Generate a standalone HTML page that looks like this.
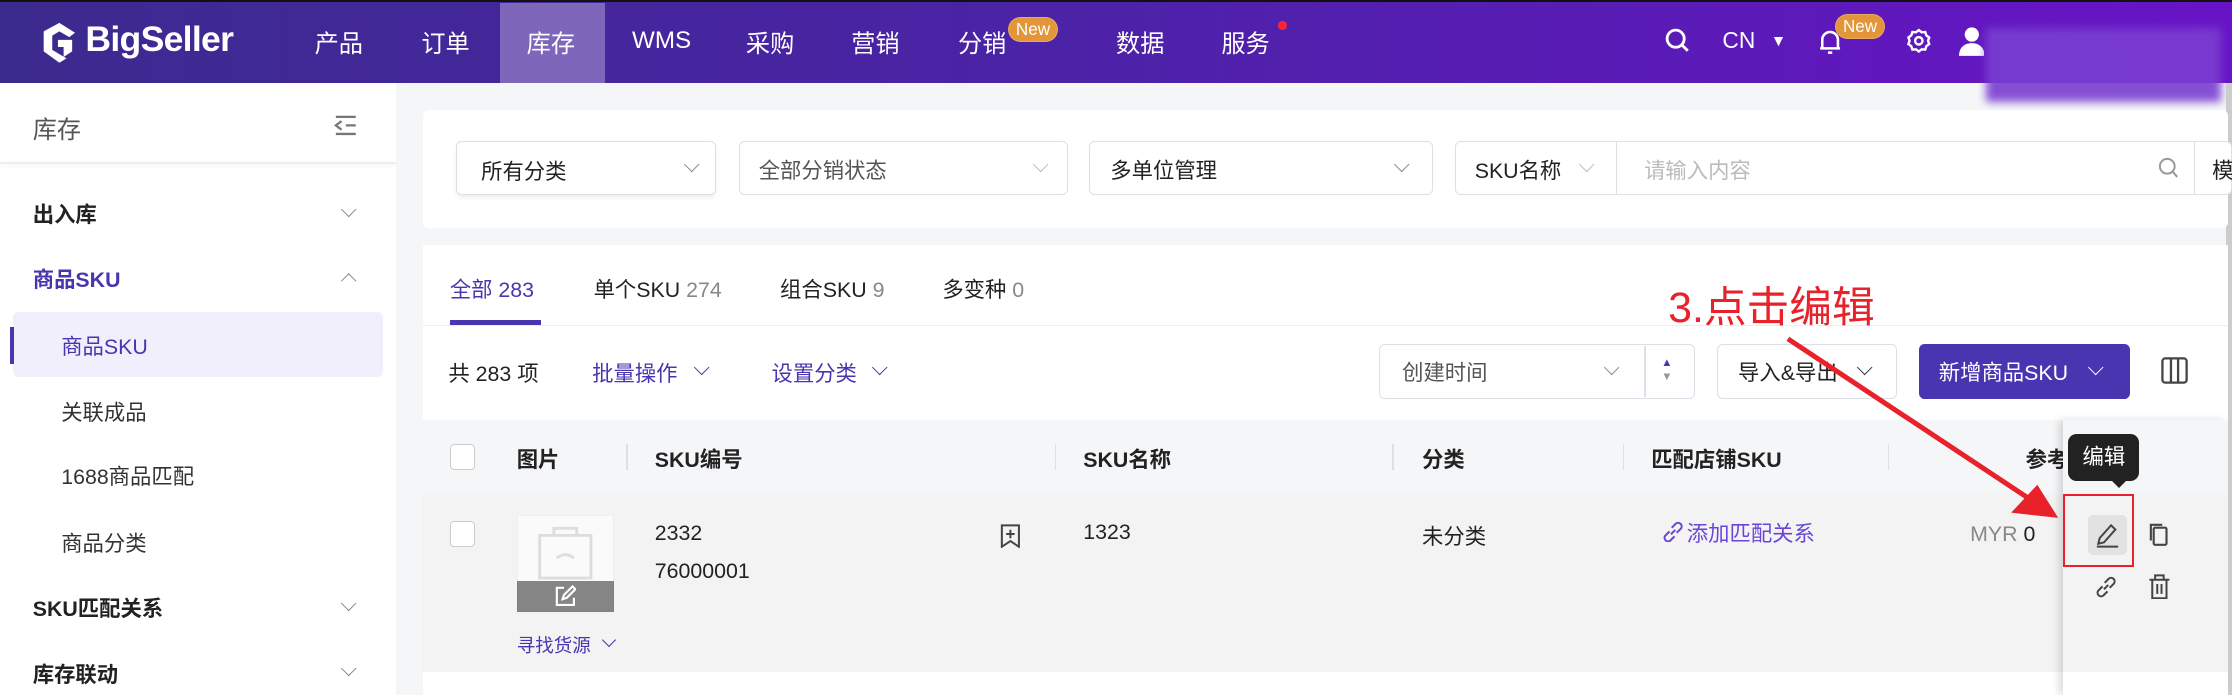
<!DOCTYPE html>
<html><head><meta charset="utf-8"><style>
*{box-sizing:border-box;margin:0;padding:0}
html,body{width:2232px;height:695px;overflow:hidden;background:#f5f6f8}
#r{width:1568px;height:488px;position:relative;zoom:1.42347;font-family:"Liberation Sans","Noto Sans CJK SC",sans-serif;font-size:15px;color:#222;overflow:hidden}
.a{position:absolute;white-space:nowrap}
.hd{left:0;top:0;width:1568px;height:58px;background:linear-gradient(90deg,#3b2b8e,#4d22a8 50%,#6814c6);border-top:2px solid #111}
.nav{color:#fff;font-size:17px;top:17px}
.badge{background:#e3953a;color:#fff;font-size:12px;border-radius:9px;padding:1px 5px;border:1px solid #fff3}
.box{background:#fff;border:1px solid #dcdfe6;border-radius:4px}
.chev{width:8px;height:8px;border-right:1.3px solid #888;border-bottom:1.3px solid #888;transform:rotate(45deg)}
.side{font-size:15px;color:#333}
.b{font-weight:bold;color:#222}
.vd{width:1px;height:18px;background:#dcdfe6;top:312px}
.th{top:311px;font-weight:bold;font-size:15px}
</style></head><body><div id="r">
<div class="a hd"></div>
<div class="a" style="left:351px;top:2px;width:74px;height:56px;background:#7e66ba"></div>
<svg class="a" style="left:27px;top:14px" width="30" height="32" viewBox="0 0 30 32"><path d="M15 2 L4 8 V22 L15 30 L20 27 L10 21 V11 L15 8 L22 12 L26 9Z M14 14 L24 14 V22 L18 26 L18 19 L14 19Z" fill="#fff"/></svg>
<div class="a" style="left:60px;top:13px;color:#fff;font-size:25px;font-weight:bold;letter-spacing:-0.5px">BigSeller</div>
<div class="a nav" style="left:221px">产品</div>
<div class="a nav" style="left:296px">订单</div>
<div class="a nav" style="left:370px">库存</div>
<div class="a nav" style="left:444px;top:19px">WMS</div>
<div class="a nav" style="left:524px">采购</div>
<div class="a nav" style="left:598px">营销</div>
<div class="a nav" style="left:673px">分销</div>
<div class="a badge" style="left:708px;top:12px">New</div>
<div class="a nav" style="left:784px">数据</div>
<div class="a nav" style="left:858px">服务</div>
<div class="a" style="left:898px;top:15px;width:6px;height:6px;border-radius:50%;background:#f23"></div>
<svg class="a" style="left:1170px;top:20px" width="17" height="18"><circle cx="7.5" cy="7.5" r="6" stroke="#fff" stroke-width="2" fill="none"/><path d="M12 12l4 4" stroke="#fff" stroke-width="2"/></svg>
<div class="a nav" style="left:1210px;top:19px;font-size:16px">CN</div>
<div class="a" style="left:1244px;top:23px;color:#fff;font-size:11px">▼</div>
<svg class="a" style="left:1277px;top:19px" width="17" height="20"><path d="M3 15V9a5.5 5.5 0 0 1 11 0v6zM1.5 15h14M7 18h3" stroke="#fff" stroke-width="1.8" fill="none"/></svg>
<div class="a badge" style="left:1289px;top:10px">New</div>
<svg class="a" style="left:1339px;top:20px" width="18" height="18" viewBox="0 0 18 18"><path d="M9 1.5l2 1.5 2.5-.2.8 2.4 2 1.5-.8 2.3.8 2.3-2 1.5-.8 2.4-2.5-.2-2 1.5-2-1.5-2.5.2-.8-2.4-2-1.5.8-2.3-.8-2.3 2-1.5.8-2.4 2.5.2z" fill="none" stroke="#fff" stroke-width="1.7"/><circle cx="9" cy="9" r="2.6" fill="none" stroke="#fff" stroke-width="1.7"/></svg>
<svg class="a" style="left:1376px;top:18px" width="18" height="22"><circle cx="9" cy="6" r="5" fill="#fff"/><path d="M0 21c0-6 4-9 9-9s9 3 9 9z" fill="#fff"/></svg>
<div class="a" style="left:1395px;top:20px;width:165px;height:52px;background:#7a3ed0;filter:blur(3px);opacity:.9"></div>
<div class="a" style="left:1564px;top:58px;width:4px;height:430px;background:#ccc"></div>
<!-- sidebar -->
<div class="a" style="left:0;top:58px;width:278px;height:430px;background:#fff"></div>
<div class="a" style="left:0;top:114px;width:278px;height:1px;background:#eee;box-shadow:0 1px 3px #0001"></div>
<div class="a side" style="left:23px;top:77px;font-size:17px;color:#555">库存</div>
<svg class="a" style="left:234px;top:80px" width="18" height="16"><path d="M2 2h14M9 8h7M2 14h14M6 5L2 8l4 3" stroke="#777" stroke-width="1.6" fill="none"/></svg>
<div class="a side b" style="left:23px;top:139px">出入库</div><div class="a chev" style="left:241px;top:143px"></div>
<div class="a side b" style="left:23px;top:185px;color:#4a35b0">商品SKU</div><div class="a chev" style="left:241px;top:193px;transform:rotate(225deg)"></div>
<div class="a" style="left:9px;top:219px;width:260px;height:46px;background:#f1effc;border-radius:4px"></div>
<div class="a" style="left:7px;top:230px;width:3px;height:26px;background:#4a35b0"></div>
<div class="a side" style="left:43px;top:232px;color:#4a35b0">商品SKU</div>
<div class="a side" style="left:43px;top:278px">关联成品</div>
<div class="a side" style="left:43px;top:323px">1688商品匹配</div>
<div class="a side" style="left:43px;top:370px">商品分类</div>
<div class="a side b" style="left:23px;top:416px">SKU匹配关系</div><div class="a chev" style="left:241px;top:420px"></div>
<div class="a side b" style="left:23px;top:462px">库存联动</div><div class="a chev" style="left:241px;top:466px"></div>
<!-- filter card -->
<div class="a" style="left:297px;top:77px;width:1268px;height:83px;background:#fff;border-radius:4px"></div>
<div class="a box" style="left:320px;top:99px;width:183px;height:38px;box-shadow:0 2px 3px #0001"></div><div class="a" style="left:338px;top:109px">所有分类</div><div class="a chev" style="left:482px;top:112px"></div>
<div class="a box" style="left:519px;top:99px;width:231px;height:38px"></div><div class="a" style="left:533px;top:108px;color:#555">全部分销状态</div><div class="a chev" style="left:727px;top:112px;border-color:#bbb"></div>
<div class="a box" style="left:765px;top:99px;width:242px;height:38px"></div><div class="a" style="left:780px;top:108px">多单位管理</div><div class="a chev" style="left:981px;top:112px"></div>
<div class="a box" style="left:1022px;top:99px;width:546px;height:38px"></div>
<div class="a" style="left:1036px;top:108px">SKU名称</div><div class="a chev" style="left:1111px;top:112px;border-color:#bbb"></div>
<div class="a" style="left:1135px;top:100px;width:1px;height:36px;background:#dcdfe6"></div>
<div class="a" style="left:1155px;top:108px;color:#bbb">请输入内容</div>
<svg class="a" style="left:1516px;top:110px" width="15" height="16"><circle cx="6.5" cy="6.5" r="5.2" stroke="#999" stroke-width="1.4" fill="none"/><path d="M10.5 10.5l3 3.5" stroke="#999" stroke-width="1.4"/></svg>
<div class="a" style="left:1541px;top:100px;width:1px;height:36px;background:#dcdfe6"></div>
<div class="a" style="left:1554px;top:108px">模</div>
<!-- main card -->
<div class="a" style="left:297px;top:172px;width:1268px;height:316px;background:#fff"></div>
<div class="a" style="left:316px;top:192px;color:#4a35b0">全部 283</div>
<div class="a" style="left:417px;top:192px">单个SKU <span style="color:#888">274</span></div>
<div class="a" style="left:548px;top:192px">组合SKU <span style="color:#888">9</span></div>
<div class="a" style="left:662px;top:192px">多变种 <span style="color:#888">0</span></div>
<div class="a" style="left:316px;top:225px;width:64px;height:3px;background:#4a35b0"></div>
<div class="a" style="left:297px;top:228px;width:1268px;height:1px;background:#eceef2"></div>
<div class="a" style="left:315px;top:251px">共 283 项</div>
<div class="a" style="left:416px;top:251px;color:#4a35b0">批量操作</div><div class="a chev" style="left:489px;top:254px;border-color:#4a35b0"></div>
<div class="a" style="left:542px;top:251px;color:#4a35b0">设置分类</div><div class="a chev" style="left:614px;top:254px;border-color:#4a35b0"></div>
<div class="a box" style="left:969px;top:242px;width:222px;height:38px"></div>
<div class="a" style="left:985px;top:250px;color:#555">创建时间</div><div class="a chev" style="left:1128px;top:254px"></div>
<div class="a" style="left:1155px;top:243px;width:1px;height:36px;background:#dcdfe6"></div>
<div class="a" style="left:1167px;top:250px;font-size:8px;color:#4a35b0;line-height:10px">▲<br><span style="color:#999">▼</span></div>
<div class="a box" style="left:1206px;top:242px;width:127px;height:38px"></div>
<div class="a" style="left:1221px;top:250px">导入&amp;导出</div><div class="a chev" style="left:1306px;top:254px;border-color:#333"></div>
<div class="a" style="left:1348px;top:242px;width:148px;height:38px;background:#4a35b0;border-radius:4px"></div>
<div class="a" style="left:1362px;top:250px;color:#fff">新增商品SKU</div><div class="a chev" style="left:1468px;top:254px;border-color:#fff"></div>
<svg class="a" style="left:1518px;top:251px" width="19" height="19"><rect x="1" y="1" width="17" height="17" rx="2" fill="none" stroke="#444" stroke-width="1.6"/><path d="M7 1v17M12 1v17" stroke="#444" stroke-width="1.6"/></svg>
<!-- table -->
<div class="a" style="left:297px;top:295px;width:1268px;height:53px;background:#f5f6f8"></div>
<div class="a" style="left:297px;top:348px;width:1268px;height:124px;background:#f3f3f3"></div>
<div class="a" style="left:316px;top:312px;width:18px;height:18px;border:1px solid #ccc;border-radius:3px;background:#fff"></div>
<div class="a th" style="left:363px">图片</div><div class="a vd" style="left:440px"></div>
<div class="a th" style="left:460px">SKU编号</div><div class="a vd" style="left:741px"></div>
<div class="a th" style="left:761px">SKU名称</div><div class="a vd" style="left:978px"></div>
<div class="a th" style="left:999px">分类</div><div class="a vd" style="left:1140px"></div>
<div class="a th" style="left:1160px">匹配店铺SKU</div><div class="a vd" style="left:1326px"></div>
<div class="a th" style="left:1423px">参考</div>
<div class="a" style="left:316px;top:366px;width:18px;height:18px;border:1px solid #ccc;border-radius:3px;background:#fff"></div>
<div class="a" style="left:363px;top:362px;width:68px;height:68px;background:#fafafa;border:1px solid #eee"></div>
<svg class="a" style="left:375px;top:368px" width="44" height="40"><path d="M4 8h36v30H4zM14 8V3h16v5M16 24q6-5 12 0" stroke="#ddd" stroke-width="2" fill="none"/></svg>
<div class="a" style="left:363px;top:408px;width:68px;height:22px;background:#0007"></div>
<svg class="a" style="left:389px;top:411px" width="16" height="16"><path d="M7 2H2v12h12V9M6 10l1-3 6-6 2 2-6 6z" stroke="#fff" stroke-width="1.5" fill="none"/></svg>
<div class="a" style="left:363px;top:444px;font-size:13px;color:#4a35b0">寻找货源</div><div class="a chev" style="left:424px;top:446px;border-color:#4a35b0;width:7px;height:7px"></div>
<div class="a" style="left:460px;top:366px">2332</div>
<div class="a" style="left:460px;top:393px">76000001</div>
<svg class="a" style="left:702px;top:368px" width="16" height="17"><path d="M2 1h12v15l-6-4-6 4z M5 7h6M8 4v6" stroke="#444" stroke-width="1.4" fill="none"/></svg>
<div class="a" style="left:761px;top:365px">1323</div>
<div class="a" style="left:999px;top:365px">未分类</div>
<svg class="a" style="left:1167px;top:365px" width="16" height="16"><path d="M7 10l3-3M6 8l-3 3a2.5 2.5 0 0 0 3.5 3.5l3-3M11 9l3-3a2.5 2.5 0 0 0-3.5-3.5l-3 3" stroke="#6a45d8" stroke-width="1.4" fill="none"/></svg>
<div class="a" style="left:1185px;top:363px;color:#6a45d8">添加匹配关系</div>
<div class="a" style="left:1384px;top:367px;color:#888">MYR <span style="color:#222">0</span></div>
<!-- fixed action col -->
<div class="a" style="left:1449px;top:295px;width:116px;height:193px;background:#fff;box-shadow:-3px 0 5px #0002"></div>
<div class="a" style="left:1449px;top:295px;width:116px;height:53px;background:#f5f6f8"></div>
<div class="a" style="left:1449px;top:348px;width:116px;height:124px;background:#f3f3f3"></div>
<div class="a" style="left:1467px;top:362px;width:27px;height:28px;background:#e2e2e2;border-radius:4px"></div>
<svg class="a" style="left:1471px;top:366px" width="19" height="20"><path d="M3 16l1-4 8-9 3 3-8 9zM2 18h15" stroke="#444" stroke-width="1.4" fill="none"/></svg>
<svg class="a" style="left:1509px;top:367px" width="16" height="18"><rect x="4" y="4" width="9" height="12" rx="1" fill="none" stroke="#444" stroke-width="1.5"/><path d="M2 13V2h8" stroke="#444" stroke-width="1.5" fill="none"/></svg>
<svg class="a" style="left:1471px;top:404px" width="17" height="17"><path d="M7 10l3-3M6 8l-3 3a2.5 2.5 0 0 0 3.5 3.5l3-3M11 9l3-3a2.5 2.5 0 0 0-3.5-3.5l-3 3" stroke="#444" stroke-width="1.4" fill="none"/></svg>
<svg class="a" style="left:1509px;top:403px" width="16" height="18"><path d="M1 4h14M5 4V1h6v3M3 4v13h10V4M6.5 7v7M9.5 7v7" stroke="#444" stroke-width="1.4" fill="none"/></svg>
<div class="a" style="left:1449px;top:347px;width:50px;height:51px;border:2px solid #e8212a"></div>
<div class="a" style="left:1453px;top:305px;width:50px;height:33px;background:#222;border-radius:6px;color:#fff;font-size:15px;text-align:center;line-height:33px">编辑</div>
<div class="a" style="left:1484px;top:338px;width:0;height:0;border:5px solid transparent;border-top-color:#222"></div>
<!-- annotation -->
<div class="a" style="left:1172px;top:192px;color:#e8212a;font-size:30px">3.点击编辑</div>
<svg class="a" style="left:0;top:0" width="1568" height="488"><path d="M1256 238L1428 352" stroke="#e8212a" stroke-width="3.5"/><path d="M1443 362L1416 359L1431 343Z" fill="#e8212a" stroke="#e8212a" stroke-width="3"/></svg>
</div></body></html>
